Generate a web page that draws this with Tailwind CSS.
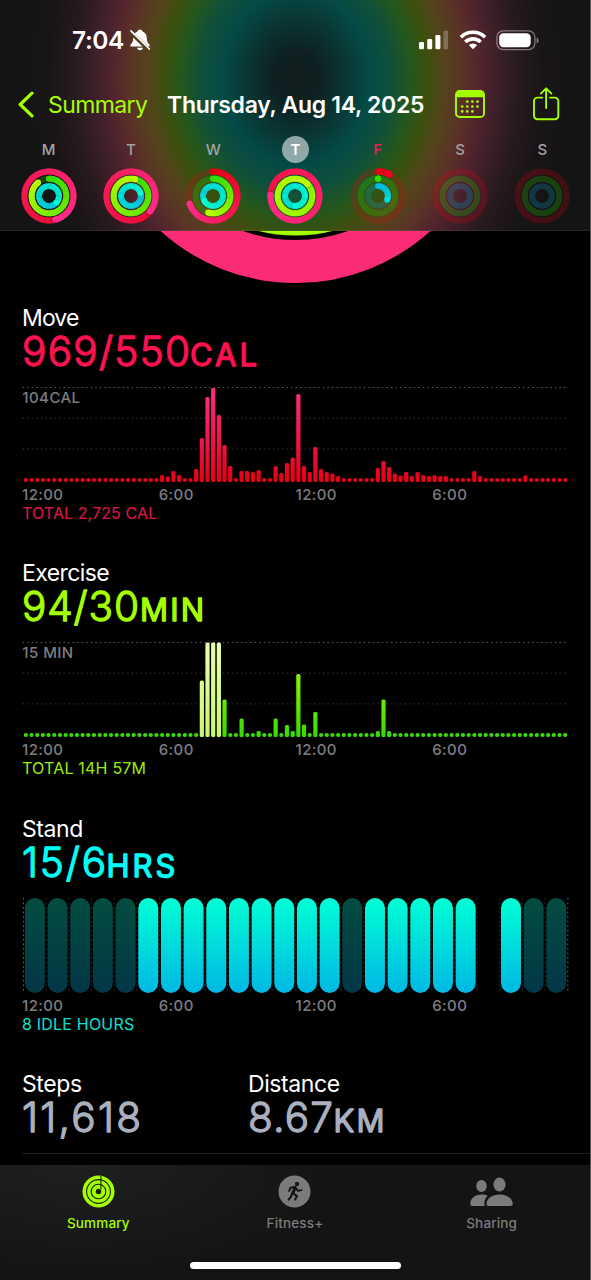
<!DOCTYPE html>
<html lang="en">
<head>
  <meta charset="UTF-8" />
  <title>Activity Summary</title>
  <script src="https://cdn.jsdelivr.net/npm/@tailwindcss/browser@4"></script>
</head>
<body class="bg-black">
  <div class="w-[591px] h-[1280px] flex flex-col overflow-hidden bg-black border-r border-[#5a5a5a] font-['Inter','Liberation_Sans',sans-serif] text-white">

    <!-- Header -->
    <header class="h-[231px] shrink-0 flex flex-col shadow-[inset_0_-1px_0_rgba(255,255,255,0.07)] bg-[#141414] bg-[radial-gradient(280px_335px_at_296px_78px,#111c1c_0%,#0e2021_8%,#0a3432_17%,#044a45_26%,#10503a_34%,#24571c_41%,#3c500f_47%,#54431c_53%,#5a3226_60%,#54252d_65%,#40202a_71%,#281a1e_79%,#191516_88%,#141414_98%)]">

      <!-- Status bar -->
      <div class="h-20 flex items-center pl-[72px] pr-[51px]">
        <span class="text-[24.5px] font-semibold tracking-[-0.4px] whitespace-nowrap w-[57px]">7:04</span>
        <svg class="w-[22px] h-[22px]" viewBox="0 0 22 22" fill="#fff">
          <path d="M11 0.6c-1.3 0-2.3.9-2.5 2C5.600 3.500 4.300 5.900 4.200 9c-.1 3.200-.7 4.600-2.100 5.900-.6.6-.8 1-.8 1.500 0 .8.600 1.200 1.500 1.200h16.400c.9 0 1.500-.4 1.500-1.200 0-.5-.2-.9-.8-1.500-1.400-1.300-2-2.700-2.100-5.900-.1-3.100-1.400-5.500-4.300-6.400-.2-1.100-1.200-2-2.500-2z" />
          <path d="M8 18.800h6c-.3 1.500-1.400 2.500-3 2.500s-2.700-1-3-2.500z" />
          <path d="M1.400 2.900L20 21" stroke="#54401f" stroke-width="4.200" />
          <path d="M2 1.900L20.400 20" stroke="#fff" stroke-width="1.700" stroke-linecap="round" />
        </svg>
        <svg class="ml-auto w-[29px] h-[20px]" viewBox="0 0 29 20" fill="#fff">
          <rect x="0" y="12" width="5" height="7.300" rx="1.300" />
          <rect x="8.200" y="9" width="5" height="10.300" rx="1.300" />
          <rect x="16.400" y="5" width="5" height="14.300" rx="1.300" />
          <rect x="24.400" y="0.800" width="5" height="18.500" rx="1.300" opacity=".25" />
        </svg>
        <svg class="ml-[11px] w-[28px] h-[20px]" viewBox="0 0 28 20" fill="none" stroke="#fff" stroke-width="3.600">
          <path d="M1.900 7.200a17.200 17.200 0 0 1 24.200 0" />
          <path d="M6.300 12a11 11 0 0 1 15.400 0" />
          <path d="M14 19.300l-4.200-4.200a6 6 0 0 1 8.400 0z" fill="#fff" stroke="none" />
        </svg>
        <svg class="ml-[9px] w-[43px] h-[21px]" viewBox="0 0 43 21" fill="none">
          <rect x="0.900" y="0.900" width="38" height="18.700" rx="6.300" stroke="#fff" stroke-opacity=".42" stroke-width="1.300" />
          <rect x="3.200" y="3.200" width="31.500" height="14" rx="4.200" fill="#fff" />
          <path d="M40.600 7.500v6c1.200-.5 2-1.700 2-3s-.8-2.500-2-3z" fill="#fff" fill-opacity=".45" />
        </svg>
      </div>

      <!-- Navigation bar -->
      <div class="h-12 flex items-center pl-[18px] pr-[29px] text-[#a4ff00]">
        <svg class="w-4 h-[27px]" viewBox="0 0 16 27" fill="none" stroke="currentColor" stroke-width="3.200" stroke-linecap="round" stroke-linejoin="round">
          <path d="M14 2.200L2.200 13.500 14 24.800" />
        </svg>
        <span class="ml-[14px] mt-[2px] w-[119px] text-[23px] tracking-[-0.6px]">Summary</span>
        <span class="mt-[2px] text-[23px] font-semibold tracking-[-0.3px] whitespace-nowrap text-white">Thursday, Aug 14, 2025</span>
        <svg class="ml-auto w-[30px] h-[28px]" viewBox="0 0 30 28" fill="currentColor">
          <rect x="1" y="1" width="28" height="26" rx="3.600" fill="none" stroke="currentColor" stroke-width="1.900" />
          <path d="M1 7.200V4a3.500 3.500 0 0 1 3.500-3.500h21A3.500 3.500 0 0 1 29 4v3.200z" />
          <g>
            <circle cx="12.300" cy="11.600" r="1.350" /><circle cx="17.400" cy="11.600" r="1.350" /><circle cx="22.500" cy="11.600" r="1.350" />
            <circle cx="7.200" cy="16.500" r="1.350" /><circle cx="12.300" cy="16.500" r="1.350" /><circle cx="17.400" cy="16.500" r="1.350" /><circle cx="22.500" cy="16.500" r="1.350" />
            <circle cx="7.200" cy="21.400" r="1.350" /><circle cx="12.300" cy="21.400" r="1.350" /><circle cx="17.400" cy="21.400" r="1.350" />
          </g>
        </svg>
        <svg class="ml-[46px] w-[30px] h-[34px]" viewBox="0 0 30 34" fill="none" stroke="currentColor" stroke-width="1.900" stroke-linecap="round" stroke-linejoin="round">
          <path d="M11.300 10.600H6.500a3.500 3.500 0 0 0-3.500 3.500v14.700a3.500 3.500 0 0 0 3.500 3.500h17.300a3.500 3.500 0 0 0 3.500-3.500V14.100a3.500 3.500 0 0 0-3.500-3.500H19" />
          <path d="M15.150 21V1.500M9.900 6.600l5.250-5.250 5.250 5.250" />
        </svg>
      </div>

      <!-- Week -->
      <div id="week" class="flex ml-[7.5px] w-[576px] pt-[8px]"></div>
    </header>

    <!-- Content -->
    <main class="flex-1 min-h-0 overflow-hidden">
      <svg class="block w-[590px] h-[73px]" viewBox="0 231 590 73" fill="none">
        <circle cx="295.500" cy="82" r="179.500" stroke="#fc2b76" stroke-width="43" />
        <circle cx="295.500" cy="82" r="132" stroke="#a4ff00" stroke-width="43" />
      </svg>

      <div class="pl-[22px]">
        <section class="h-[255.3px]">
          <h2 class="h-7 text-[23px] leading-7 tracking-[-0.9px]">Move</h2>
          <svg class="block overflow-visible w-[300px] h-10" viewBox="22 0 300 40" fill="#ff1150" stroke="#ff1150" stroke-width="1.300" stroke-linejoin="round">
            <text x="22" y="33.800" font-size="40.500" font-weight="300" textLength="168">969/550</text>
            <text x="190" y="33.800" font-size="31" font-weight="400" textLength="67">CAL</text>
          </svg>
          <svg id="moveChart" class="block mt-3 w-[547px] h-[100px]" viewBox="22 0 547 100"></svg>
          <div class="grid grid-cols-4 w-[547px] h-5 text-[15px] leading-[21px] font-medium tracking-[0.4px] text-[#7d7d82]">
            <span>12:00</span><span>6:00</span><span>12:00</span><span>6:00</span>
          </div>
          <p class="text-[16px] leading-[19px] text-[#e8114b] tracking-[0.1px]">TOTAL 2,725 CAL</p>
        </section>

        <section class="h-[255.3px]">
          <h2 class="h-7 text-[23px] leading-7 tracking-[-0.6px]">Exercise</h2>
          <svg class="block overflow-visible w-[300px] h-10" viewBox="22 0 300 40" fill="#a4ff00" stroke="#a4ff00" stroke-width="1.300" stroke-linejoin="round">
            <text x="22" y="33.800" font-size="40.500" font-weight="300" textLength="117">94/30</text>
            <text x="140" y="33.800" font-size="31" font-weight="400" textLength="64">MIN</text>
          </svg>
          <svg id="exerciseChart" class="block mt-3 w-[547px] h-[100px]" viewBox="22 0 547 100"></svg>
          <div class="grid grid-cols-4 w-[547px] h-5 text-[15px] leading-[21px] font-medium tracking-[0.4px] text-[#7d7d82]">
            <span>12:00</span><span>6:00</span><span>12:00</span><span>6:00</span>
          </div>
          <p class="text-[16px] leading-[19px] text-[#9bee07] tracking-[0.2px]">TOTAL 14H 57M</p>
        </section>

        <section class="h-[255.3px]">
          <h2 class="h-7 text-[23px] leading-7 tracking-[-0.4px]">Stand</h2>
          <svg class="block overflow-visible w-[300px] h-10" viewBox="22 0 300 40" fill="#00fff6" stroke="#00fff6" stroke-width="1.300" stroke-linejoin="round">
            <text x="22" y="33.800" font-size="40.500" font-weight="300" textLength="84">15/6</text>
            <text x="106.500" y="33.800" font-size="31" font-weight="400" textLength="69">HRS</text>
          </svg>
          <svg id="standChart" class="block mt-3 w-[547px] h-[100px]" viewBox="22 0 547 100"></svg>
          <div class="grid grid-cols-4 w-[547px] h-5 text-[15px] leading-[21px] font-medium tracking-[0.4px] text-[#7d7d82]">
            <span>12:00</span><span>6:00</span><span>12:00</span><span>6:00</span>
          </div>
          <p class="text-[16px] leading-[19px] text-[#0ce0d2] tracking-[0.2px]">8 IDLE HOURS</p>
        </section>

        <section class="flex h-[84px] border-b border-[#1c1c1e]">
          <div class="w-[226px]">
            <h2 class="h-7 text-[23px] leading-7 tracking-[-0.4px]">Steps</h2>
            <svg class="block overflow-visible w-[200px] h-10" viewBox="22 0 200 40" fill="#aab0be" stroke="#aab0be" stroke-width="1.300" stroke-linejoin="round">
              <text x="22" y="33.800" font-size="40.500" font-weight="300" textLength="119">11,618</text>
            </svg>
          </div>
          <div>
            <h2 class="h-7 text-[23px] leading-7 tracking-[-0.4px]">Distance</h2>
            <svg class="block overflow-visible w-[200px] h-10" viewBox="248 0 200 40" fill="#aab0be" stroke="#aab0be" stroke-width="1.300" stroke-linejoin="round">
              <text x="248" y="33.800" font-size="40.500" font-weight="300" textLength="85">8.67</text>
              <text x="333.500" y="33.800" font-size="31" font-weight="400" textLength="51">KM</text>
            </svg>
          </div>
        </section>
      </div>
    </main>

    <!-- Tab bar -->
    <nav class="h-[115px] shrink-0 flex flex-col items-center bg-[#141414] bg-[radial-gradient(ellipse_260px_110px_at_80px_0px,#1e1f1f,#141414)]">
      <div class="grid grid-cols-3 w-[590px] h-[96px] pt-[10px] text-[13.500px] font-medium tracking-[0.15px] text-[#7b7b7b]">
        <div class="flex flex-col items-center text-[#a4ff00]">
          <svg class="w-[33px] h-[33px]" viewBox="0 0 33 33" fill="none" stroke="#152000">
            <circle cx="16.500" cy="16.500" r="16" fill="currentColor" stroke="none" />
            <circle cx="16.500" cy="16.500" r="11.900" stroke-width="1.100" />
            <circle cx="16.500" cy="16.500" r="7.300" stroke-width="1.100" />
            <circle cx="16.500" cy="16.500" r="2.700" fill="#152000" stroke="none" />
            <path d="M18.900 1v13.500" stroke-width="1.100" />
          </svg>
          <span class="mt-[5px]">Summary</span>
        </div>
        <div class="flex flex-col items-center">
          <svg class="w-[33px] h-[33px]" viewBox="0 0 33 33" fill="none" stroke="#161616" stroke-width="2" stroke-linecap="round" stroke-linejoin="round">
            <circle cx="16.500" cy="16.500" r="16" fill="currentColor" stroke="none" />
            <circle cx="19" cy="9" r="2.200" fill="#161616" stroke="none" />
            <path d="M17 12.400l-2 5.600" stroke-width="3.300" />
            <path d="M16.400 12l-4 .7-1.200 3.300M18 13.400l2 2.500 3.400-.8" />
            <path d="M15.200 18.600l3.800 2.200-1.800 3.700M14.200 18.500l-1.400 3.500-2.200 2.700" stroke-width="2.100" />
          </svg>
          <span class="mt-[5px]">Fitness+</span>
        </div>
        <div class="flex flex-col items-center">
          <svg class="w-[43px] h-[33px]" viewBox="0 0 43 33" fill="currentColor">
            <ellipse cx="11.500" cy="11" rx="5.300" ry="6" />
            <path d="M0.300 28.600C0.300 23.500 5 19.500 11.500 19.500c2.500 0 4.600.4 6.300 1.200-2.300 2-3.500 4.700-3.500 7.700 0 1.100.2 1.900.7 2.600H2.300C.9 31 .3 30 .3 28.600z" />
            <ellipse cx="29.500" cy="9.600" rx="6.100" ry="7" />
            <path d="M16.500 28.800c0-4.800 5.200-9.300 13.100-9.300s13.100 4.500 13.100 9.300c0 1.500-.8 2.200-2.400 2.200H18.900c-1.600 0-2.400-.7-2.400-2.200z" />
          </svg>
          <span class="mt-[5px]">Sharing</span>
        </div>
      </div>
      <div class="w-[211px] h-[7px] mt-[1px] rounded-full bg-white"></div>
    </nav>
  </div>

  <script>
    // ring progress per day: [move, exercise, stand], 1 = goal reached
    const days = [
      { name: 'M', rings: [1.46, 0.89, 1.37] },
      { name: 'T', rings: [1.36, 1.04, 1.20] },
      { name: 'W', rings: [0.70, 0.545, 1.68] },
      { name: 'T', rings: [1.76, 3.13, 2.5], selected: true },
      { name: 'F', rings: [0.08, 0.001, 0.31], today: true },
      { name: 'S', rings: [0, 0, 0] },
      { name: 'S', rings: [0, 0, 0] }
    ];

    const ringStyles = [
      { r: 24.5, w: 6.1, from: [230, 0, 20], to: [255, 45, 135] },
      { r: 17.3, w: 6.1, from: [50, 222, 0], to: [185, 255, 0] },
      { r: 9.9, w: 5.9, from: [0, 184, 230], to: [0, 255, 212] }
    ];

    function point(r, turn) {
      const a = turn * 2 * Math.PI;
      return [28 + r * Math.sin(a), 28 - r * Math.cos(a)];
    }

    function drawRing(style, progress) {
      const { r, w, from, to } = style;
      let out = `<circle cx="28" cy="28" r="${r}" stroke="rgb(${from})" stroke-width="${w}" opacity=".22"/>`;
      if (!progress) return out;

      // short arcs only get part of the colour range
      const span = Math.max(progress, 0.55);
      const color = turn => 'rgb(' + from.map((c, i) => Math.round(c + (to[i] - c) * Math.min(1, turn / span))) + ')';
      const start = Math.max(0, progress - 1);
      const steps = 60;
      const [sx, sy] = point(r, start);
      if (progress < 1) out += `<circle cx="${sx}" cy="${sy}" r="${w / 2}" fill="${color(0)}"/>`;

      for (let i = 0; i < steps; i++) {
        const t0 = start + (progress - start) * i / steps;
        const t1 = start + (progress - start) * (i + 1) / steps;
        const [x0, y0] = point(r, t0);
        const [x1, y1] = point(r, i < steps - 1 ? t1 + 0.004 : t1);
        out += `<path d="M${x0} ${y0}A${r} ${r} 0 0 1 ${x1} ${y1}" stroke="${color(t1)}" stroke-width="${w}"/>`;
      }

      const [ex, ey] = point(r, progress);
      if (progress > 1) {
        const [hx, hy] = point(r, progress + 0.01);
        out += `<circle cx="${hx}" cy="${hy}" r="${w / 2}" fill="#000" opacity=".2"/>`;
      }
      out += `<circle cx="${ex}" cy="${ey}" r="${w / 2}" fill="${color(progress)}"/>`;
      return out;
    }

    document.getElementById('week').innerHTML = days.map(day => {
      let label = 'text-[#a3a3a3]';
      if (day.selected) label = 'bg-white/55 text-white font-semibold';
      if (day.today) label = 'text-[#f5174f]';
      return `
        <div class="flex-1 flex flex-col items-center">
          <span class="w-[27px] h-[27px] pt-px rounded-full flex items-center justify-center text-[15px] font-medium ${label}">${day.name}</span>
          <svg class="mt-[5px] w-14 h-14" viewBox="0 0 56 56" fill="none">
            ${ringStyles.map((s, i) => drawRing(s, day.rings[i])).join('')}
          </svg>
        </div>`;
    }).join('');

    // bar heights in px, one bar per 15 minutes
    const move = new Array(96).fill(4);
    Object.assign(move, {
      24: 7, 25: 5.5, 26: 11, 27: 7, 30: 13, 31: 44, 32: 85, 33: 94, 34: 67, 35: 37, 36: 16,
      38: 11, 39: 11, 40: 10, 41: 12, 44: 16, 45: 9, 46: 19, 47: 24.5, 48: 88, 49: 16, 50: 10,
      51: 35, 52: 13, 53: 10, 54: 8.5, 55: 6, 62: 14, 63: 21, 64: 15, 65: 8.5, 66: 6.5, 67: 10,
      68: 6, 69: 10, 70: 7, 71: 6, 72: 7, 73: 6, 74: 6, 79: 11, 80: 6, 88: 6.5
    });
    const exercise = new Array(96).fill(4);
    Object.assign(exercise, {
      31: 56.5, 32: 94.5, 33: 94.5, 34: 94.5, 35: 37.5, 38: 18.5, 41: 6, 44: 18.5, 46: 12, 47: 6,
      48: 63, 49: 12.5, 51: 25, 62: 6, 63: 37.5, 64: 6
    });

    function gradient(id, top, bottom) {
      return `<linearGradient id="${id}" gradientUnits="userSpaceOnUse" x1="0" y1="3.500" x2="0" y2="98">
        <stop offset="0" stop-color="${top}"/><stop offset="1" stop-color="${bottom}"/></linearGradient>`;
    }

    function barChart(id, data, label, fill, defs) {
      const grid = [[3.5, '#5c5c5e'], [34.2, '#38383a'], [64.9, '#38383a']].map(([y, c]) =>
        `<path d="M22.500 ${y}H568.500" stroke="${c}" stroke-width="1" stroke-dasharray="1.500 3.050"/>`).join('');
      const bars = data.map((h, i) =>
        `<rect x="${(25.85 + i * 5.677 - 2.1).toFixed(2)}" y="${98 - h}" width="4.200" height="${h}" rx="${h > 4 ? 1.5 : 2}" fill="${fill(i)}"/>`).join('');
      document.getElementById(id).innerHTML = `
        <defs>${defs}</defs>${grid}
        <text x="22.300" y="18.500" font-size="15" font-weight="500" fill="#7d7d82" letter-spacing=".45">${label}</text>
        ${bars}`;
    }

    barChart('moveChart', move, '104CAL', () => 'url(#red)', gradient('red', '#ff2d87', '#e60012'));
    barChart('exerciseChart', exercise, '15 MIN',
      i => i >= 31 && i <= 34 ? 'url(#pale)' : 'url(#green)',
      gradient('green', '#b4ff00', '#35dc00') + gradient('pale', '#e6ffb0', '#c8f76e'));

    // a = active, i = idle, - = no data
    const stand = 'iiiiiaaaaaaaaaiaaaaa-aii';
    let pills = '';
    for (let k = 0; k <= 24; k++) {
      const edge = k === 0 || k === 24;
      pills += `<path d="M${23.5 + k * 22.68} 3V96.500" stroke="${edge ? '#6a6a6c' : '#303032'}" stroke-width="1" stroke-dasharray="1.500 3.050"/>`;
    }
    [...stand].forEach((s, i) => {
      if (s === '-') return;
      pills += `<rect x="${(34.9 + i * 22.67 - 10).toFixed(2)}" y="3" width="20" height="95" rx="10" fill="url(#${s === 'a' ? 'aqua' : 'idle'})"/>`;
    });
    document.getElementById('standChart').innerHTML =
      `<defs>${gradient('aqua', '#00ffd5', '#00b8e4')}${gradient('idle', '#034c40', '#033747')}</defs>${pills}`;
  </script>
</body>
</html>
